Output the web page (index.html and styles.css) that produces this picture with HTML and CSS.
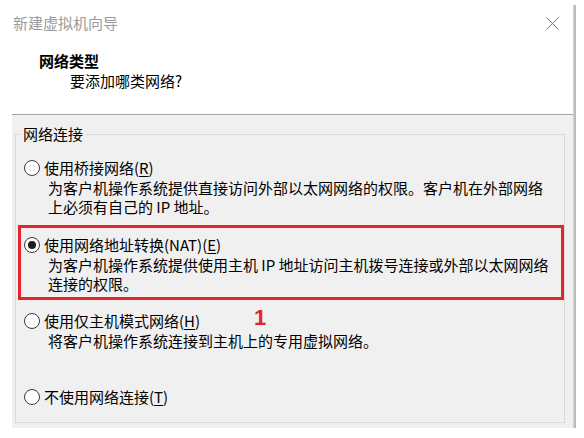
FILE: index.html
```html
<!DOCTYPE html>
<html lang="zh-CN">
<head>
<meta charset="utf-8">
<title>新建虚拟机向导</title>
<link rel="stylesheet" href="styles.css">
</head>
<body>
<div class="dialog">
  <div class="window">
    <header class="head">
      <div class="titlebar">
        <span class="title">新建虚拟机向导</span>
        <svg class="close" width="13" height="13" viewBox="0 0 13 13"><path d="M0.5 0.5 L12.5 12.5 M12.5 0.5 L0.5 12.5" stroke="#777" stroke-width="1" fill="none"/></svg>
      </div>
      <div class="heading">网络类型</div>
      <div class="subheading">要添加哪类网络?</div>
    </header>
    <main class="panel">
      <fieldset class="group">
        <legend class="legend">网络连接</legend>
        <div class="option opt-bridge">
          <div class="opt-row"><span class="radio"></span><span>使用桥接网络(<u>R</u>)</span></div>
          <div class="opt-desc">为客户机操作系统提供直接访问外部以太网网络的权限。客户机在外部网络<br>上必须有自己的 IP 地址。</div>
        </div>
        <div class="option opt-nat selected">
          <div class="opt-row"><span class="radio checked"></span><span>使用网络地址转换(NAT)(<u>E</u>)</span></div>
          <div class="opt-desc">为客户机操作系统提供使用主机 IP 地址访问主机拨号连接或外部以太网网络<br>连接的权限。</div>
        </div>
        <div class="option opt-host">
          <div class="opt-row"><span class="radio"></span><span>使用仅主机模式网络(<u>H</u>)</span></div>
          <div class="opt-desc">将客户机操作系统连接到主机上的专用虚拟网络。</div>
        </div>
        <div class="option opt-none">
          <div class="opt-row"><span class="radio"></span><span>不使用网络连接(<u>T</u>)</span></div>
        </div>
      </fieldset>
      <span class="marker">1</span>
    </main>
  </div>
  <div class="edge"></div>
</div>
</body>
</html>
```
FILE: styles.css
```css
html, body {
  margin: 0;
  padding: 0;
  background: #ffffff;
}
body {
  font-family: "Noto Sans CJK SC", "Noto Sans", sans-serif;
  font-size: 15px;
  color: #000;
}
.dialog {
  display: flex;
  width: 576px;
}
.window {
  width: 573px;
}
.head {
  height: 114px;
  box-sizing: border-box;
  padding: 13px 0 0 13px;
}
.titlebar {
  display: flex;
  justify-content: space-between;
  align-items: center;
  height: 20px;
  line-height: 20px;
  padding-right: 14px;
  color: #9b9b9b;
}
.close {
  display: block;
}
.heading {
  margin-top: 18px;
  padding-left: 26px;
  line-height: 20px;
  font-weight: bold;
}
.subheading {
  padding-left: 57px;
  line-height: 20px;
}
.panel {
  position: relative;
  margin-left: 12px;
  height: 314px;
  box-sizing: border-box;
  border-top: 1px solid #a3a3a3;
  background: #f0f0f0;
  padding: 9px 8px 0 3px;
}
.group {
  margin: 0;
  padding: 0 0 8px 0;
  border: 1px solid #dadada;
  min-width: 0;
}
.legend {
  margin-left: 4px;
  padding: 0 3px;
  line-height: 20px;
}
.option {
  margin: 0 0 0 2px;
  padding: 7px 3px 4px 3px;
  border: 3px solid transparent;
}
.option.selected {
  border-color: #e4252c;
}
.opt-bridge { margin-top: 4px; }
.opt-nat { margin-top: 2px; }
.opt-host { margin-top: 1px; }
.opt-none { margin-top: 20px; }
.opt-row {
  display: flex;
  align-items: center;
  gap: 4px;
  line-height: 20px;
}
.radio {
  width: 16px;
  height: 16px;
  box-sizing: border-box;
  border: 1px solid #3a3a3a;
  border-radius: 50%;
  background: #fff;
  display: flex;
  align-items: center;
  justify-content: center;
  flex: none;
}
.radio.checked::after {
  content: "";
  width: 8px;
  height: 8px;
  border-radius: 50%;
  background: #1e1e1e;
}
.opt-desc {
  padding-left: 24px;
  line-height: 19px;
}
u {
  text-decoration: underline;
  text-underline-offset: 2px;
}
.marker {
  position: absolute;
  left: 242px;
  top: 192px;
  font-family: "Liberation Sans", sans-serif;
  font-weight: bold;
  font-size: 22px;
  line-height: 1;
  color: #e3232b;
}
.edge {
  width: 3px;
  margin-top: 5px;
  height: 423px;
  background: linear-gradient(to right, #d6d6d6, #b0b0b0);
}
```
